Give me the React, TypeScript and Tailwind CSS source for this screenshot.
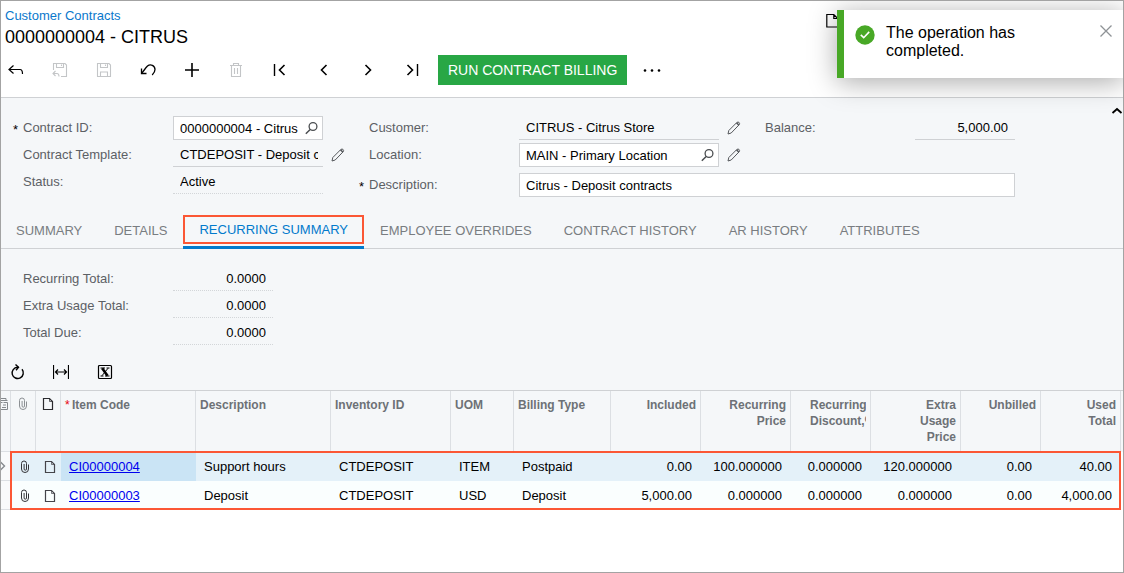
import React, { useState } from "react";

type IconProps = { children: React.ReactNode; className?: string; size?: number };

function Icon({ children, className = "", size = 16 }: IconProps) {
  return (
    <svg
      width={size}
      height={size}
      viewBox={`0 0 ${size} ${size}`}
      fill="none"
      stroke="currentColor"
      strokeWidth="1.4"
      className={`block shrink-0 ${className}`}
      aria-hidden="true"
    >
      {children}
    </svg>
  );
}

const BackIcon = () => (
  <Icon>
    <path d="M5.500 3.500 1 7.500l4.500 4M1 7.500h11q2.500 0 2.500 4.500" strokeWidth="1.200" />
  </Icon>
);

const SaveCloseIcon = () => (
  <Icon>
    <path d="M1.500 8V1.500H13L14.500 3v11.500H9M4.500 1.500v4h7v-4M9.500 2.500v1.500" strokeWidth="1.1" />
    <path d="M3.500 9 1 11.500 3.500 14M1 11.500h4q2 0 2 3" strokeWidth="1.100" />
  </Icon>
);

const SaveIcon = () => (
  <Icon>
    <path d="M1.500 1.500H13L14.500 3v11.500h-13zM4.500 1.500v4h7v-4M9.500 2.500v1.500M4.500 14.500v-4.500h7v4.500" strokeWidth="1.1" />
  </Icon>
);

const UndoIcon = () => (
  <Icon>
    <path d="M1.500 6.500v5h5" strokeWidth="1.300" />
    <path d="M1.500 11.500C4 8.500 5.500 6 7.500 4c3-2.500 7.500-.5 7.500 3.500 0 2-1 3.700-2.800 5.500" strokeWidth="1.300" />
  </Icon>
);

const PlusIcon = () => (
  <Icon>
    <path d="M8 1v14M1 8h14" strokeWidth="1.600" />
  </Icon>
);

const TrashIcon = () => (
  <Icon>
    <path d="M2 3.500h12M5.500 3.500v-2h5v2M3.500 3.500v11h9v-11M6.500 6v6M9.500 6v6" strokeWidth="1.100" />
  </Icon>
);

const FirstIcon = () => (
  <Icon>
    <path d="M2.500 2v12" strokeWidth="1.400" />
    <path d="M12.500 3 7.500 8l5 5" strokeWidth="1.600" />
  </Icon>
);

const PrevIcon = () => (
  <Icon>
    <path d="M10.500 3 5.500 8l5 5" strokeWidth="1.600" />
  </Icon>
);

const NextIcon = () => (
  <Icon>
    <path d="m5.500 3 5 5-5 5" strokeWidth="1.600" />
  </Icon>
);

const LastIcon = () => (
  <Icon>
    <path d="M13.500 2v12" strokeWidth="1.400" />
    <path d="m3.500 3 5 5-5 5" strokeWidth="1.600" />
  </Icon>
);

const SearchIcon = () => (
  <Icon size={14} className="text-[#4a4d50]">
    <circle cx="9" cy="5.500" r="3.900" strokeWidth="1.300" />
    <path d="M6.200 8.500 1.800 12.700" strokeWidth="1.500" />
  </Icon>
);

const PencilIcon = () => (
  <Icon size={14} className="text-[#55585c]">
    <path d="M1 13l.8-3.500L9.800 1.500q1.300-1 2.300 0 1 1 0 2.300L4.200 12z" strokeWidth="1" />
    <path d="m9.500 1.800 2.500 2.500" strokeWidth="1.600" />
  </Icon>
);

const RefreshIcon = () => (
  <Icon>
    <path d="M9.500 3.300H8.500A5.600 5.600 0 1 0 13 5.300" strokeWidth="1.400" />
    <path d="M6.500.5 9.500 3.300 7 6.200" strokeWidth="1.400" />
  </Icon>
);

const FitIcon = () => (
  <Icon>
    <path d="M.5 1v14M15.500 1v14M2.500 8h11M5 5.500 2.500 8 5 10.500M11 5.500 13.500 8 11 10.500" strokeWidth="1.200" />
  </Icon>
);

const ExportIcon = () => (
  <Icon>
    <rect x="1.500" y="1.500" width="13" height="13" rx="1" strokeWidth="1.200" />
    <path d="m5.200 4.200 5.300 7.600" strokeWidth="2.600" />
    <path d="M11 4.300 5 11.700M3.500 4h4.500M9.500 4h3M3.500 12h3M8 12h4.500" strokeWidth="1" />
  </Icon>
);

const ClipIcon = ({ className = "" }: { className?: string }) => (
  <svg width="10" height="14" viewBox="0 0 10 14" fill="none" stroke="currentColor" strokeWidth="1" className={`block ${className}`} aria-hidden="true">
    <path d="M1.500 3.500v5.500a3.500 3.500 0 0 0 7 0V4.500M1.500 3.500a2.500 2.500 0 0 1 5 0V9a1.200 1.200 0 0 1-2.400 0V4" />
  </svg>
);

const PageIcon = ({ className = "" }: { className?: string }) => (
  <svg width="12" height="14" viewBox="0 0 12 14" fill="none" stroke="currentColor" className={`block ${className}`} aria-hidden="true">
    <path d="M1.500 1.500h6l3 3v8h-9z" strokeWidth="1.200" />
    <path d="M7.500 1.500v3h3" strokeWidth=".7" />
  </svg>
);

const toolbar = [
  { name: "Back", icon: <BackIcon />, disabled: false },
  { name: "Save and Close", icon: <SaveCloseIcon />, disabled: true },
  { name: "Save", icon: <SaveIcon />, disabled: true },
  { name: "Undo", icon: <UndoIcon />, disabled: false },
  { name: "Add", icon: <PlusIcon />, disabled: false },
  { name: "Delete", icon: <TrashIcon />, disabled: true },
  { name: "First", icon: <FirstIcon />, disabled: false },
  { name: "Previous", icon: <PrevIcon />, disabled: false },
  { name: "Next", icon: <NextIcon />, disabled: false },
  { name: "Last", icon: <LastIcon />, disabled: false },
];

function FieldLabel({ id, text, required = false }: { id: string; text: string; required?: boolean }) {
  return (
    <div className="flex h-[18px] w-40 shrink-0 text-[#5c6065]">
      <span className="w-2.5 shrink-0 pt-0.5 text-black">{required ? "*" : ""}</span>
      <label htmlFor={id}>{text}</label>
    </div>
  );
}

type FieldProps = {
  id: string;
  value: string;
  width: string;
  kind?: "box" | "line" | "dotted";
  search?: boolean;
  right?: boolean;
};

function Field({ id, value, width, kind = "box", search = false, right = false }: FieldProps) {
  const frame =
    kind === "box"
      ? "border border-[#cfd1d4] bg-white pl-1.5 pr-1"
      : kind === "line"
        ? "border-b border-[#cfd1d4] pl-[7px] pr-[5px]"
        : "border-b border-dotted border-[#d3d6d9] pl-[7px] pr-[5px]";
  return (
    <div className={`flex h-6 items-center ${width} ${frame}`}>
      <input
        id={id}
        defaultValue={value}
        readOnly={kind !== "box"}
        className={`h-5 min-w-0 flex-1 bg-transparent text-black outline-none ${right ? "pr-0.5 text-right" : ""}`}
      />
      {search && (
        <button type="button" aria-label="Select" className="shrink-0">
          <SearchIcon />
        </button>
      )}
    </div>
  );
}

const EditButton = () => (
  <button type="button" aria-label="Edit" className="ml-2 shrink-0">
    <PencilIcon />
  </button>
);

const tabs = [
  "SUMMARY",
  "DETAILS",
  "RECURRING SUMMARY",
  "EMPLOYEE OVERRIDES",
  "CONTRACT HISTORY",
  "AR HISTORY",
  "ATTRIBUTES",
];

const totals = [
  { id: "recurring-total", label: "Recurring Total:", value: "0.0000" },
  { id: "extra-total", label: "Extra Usage Total:", value: "0.0000" },
  { id: "total-due", label: "Total Due:", value: "0.0000" },
];

const columns: { title: React.ReactNode; right?: boolean }[] = [
  { title: "Description" },
  { title: "Inventory ID" },
  { title: "UOM" },
  { title: "Billing Type" },
  { title: "Included", right: true },
  { title: <>Recurring<br />Price</>, right: true },
  {
    title: (
      <span className="ml-auto block w-14 overflow-hidden text-left whitespace-nowrap">
        Recurring
        <br />
        Discount,%
      </span>
    ),
    right: true,
  },
  { title: <>Extra<br />Usage<br />Price</>, right: true },
  { title: "Unbilled", right: true },
  { title: <>Used<br />Total</>, right: true },
];

const rows = [
  {
    code: "CI00000004",
    cells: ["Support hours", "CTDEPOSIT", "ITEM", "Postpaid", "0.00", "100.000000", "0.000000", "120.000000", "0.00", "40.00"],
  },
  {
    code: "CI00000003",
    cells: ["Deposit", "CTDEPOSIT", "USD", "Deposit", "5,000.00", "0.000000", "0.000000", "0.000000", "0.00", "4,000.00"],
  },
];

const headCell = "border-r border-b border-[#dcdfe3] pt-1.5 align-top";

function ItemsGrid() {
  return (
    <div className="relative border-t border-[#cfd1d4] bg-white">
      <table className="w-full table-fixed border-separate border-spacing-0">
        <colgroup>
          <col className="w-[11px]" />
          <col className="w-[25px]" />
          <col className="w-[25px]" />
          <col className="w-[135px]" />
          <col className="w-[135px]" />
          <col className="w-[120px]" />
          <col className="w-[63px]" />
          <col className="w-[97px]" />
          <col className="w-[90px]" />
          <col className="w-[90px]" />
          <col className="w-[80px]" />
          <col className="w-[90px]" />
          <col className="w-[80px]" />
          <col className="w-[80px]" />
          <col />
        </colgroup>
        <thead className="bg-[#f5f7f9] text-xs leading-4 text-[#6d7176]">
          <tr className="h-[61px]">
            <th className={headCell}>
              <svg width="8" height="13" viewBox="0 0 8 13" fill="none" stroke="#85898d" className="block" aria-hidden="true">
                <path d="M1 1.500h5v2M1 3.500h6.500M3.500 5.500h4v7H1M1 5.500h1.500M3 8h3M2 10.500h4" />
              </svg>
            </th>
            <th className={headCell}>
              <ClipIcon className="mx-auto text-[#8c9094]" />
            </th>
            <th className={headCell}>
              <PageIcon className="mx-auto text-[#2a2a2e]" />
            </th>
            <th className={`${headCell} px-1 text-left font-bold`}>
              <span className="inline-block w-[7px] font-normal text-red-600">*</span>
              Item Code
            </th>
            {columns.map((c, i) => (
              <th key={i} className={`${headCell} px-1 font-bold ${c.right ? "text-right" : "text-left"}`}>
                {c.title}
              </th>
            ))}
            <td />
          </tr>
        </thead>
        <tbody className="text-[13px] leading-4 text-black">
          {rows.map((r, ri) => (
            <tr key={r.code} className={`h-[29px] ${ri === 0 ? "bg-[#e4f1f9]" : "bg-[#fafefe]"}`}>
              <td className="border-b border-[#dcdfe3] bg-[#f9fafb]">
                {ri === 0 && (
                  <svg width="6" height="10" viewBox="0 0 6 10" fill="none" stroke="#85898d" strokeWidth="1.400" className="block" aria-hidden="true">
                    <path d="m.5 1 4 4-4 4" />
                  </svg>
                )}
              </td>
              <td className="pl-0.5">
                <ClipIcon className="mx-auto text-[#333337]" />
              </td>
              <td className="pl-0.5">
                <PageIcon className="mx-auto text-[#44444a]" />
              </td>
              <td className={`px-2 ${ri === 0 ? "bg-[#cae4f5]" : ""}`}>
                <a href="#item" className="text-[#0000ee] underline">
                  {r.code}
                </a>
              </td>
              {r.cells.map((v, i) => (
                <td key={i} className={`border-r border-transparent px-2 ${columns[i].right ? "text-right" : ""}`}>
                  {v}
                </td>
              ))}
              <td className="bg-white" />
            </tr>
          ))}
        </tbody>
      </table>
      <div className="pointer-events-none absolute right-[3px] bottom-0 left-2.5 h-[59px] border-2 border-[#fb5735]" />
    </div>
  );
}

function Toast({ onClose }: { onClose: () => void }) {
  return (
    <div
      role="status"
      className="absolute top-2.5 right-0 z-10 flex w-[287px] items-start border-l-[7px] border-[#48a826] bg-white pt-3.5 pr-2.5 pb-[18px] pl-[11px] text-base leading-[18px] text-black shadow-[0_4px_28px_rgba(0,0,0,0.34)]"
    >
      <svg width="20" height="20" viewBox="0 0 20 20" className="mt-px mr-[11px] block shrink-0" aria-hidden="true">
        <circle cx="10" cy="10" r="9.700" fill="#48a826" />
        <path d="m5.800 9.900 2.900 2.800 5.500-5.800" fill="none" stroke="#fff" strokeWidth="1.600" />
      </svg>
      <p className="w-[150px]">The operation has completed.</p>
      <button type="button" aria-label="Close" onClick={onClose} className="ml-auto text-[#8e9296]">
        <Icon>
          <path d="m2.500 1.500 11 11M13.500 1.500l-11 11" strokeWidth="1.300" />
        </Icon>
      </button>
    </div>
  );
}

export default function App() {
  const [tab, setTab] = useState("RECURRING SUMMARY");
  const [toast, setToast] = useState(true);

  return (
    <div className="relative min-h-screen overflow-hidden bg-white font-['Liberation_Sans',Arial,sans-serif] text-[13px] leading-[18px] after:pointer-events-none after:absolute after:inset-0 after:z-20 after:border after:border-[#a3a3a3]">
      {toast && <Toast onClose={() => setToast(false)} />}

      <header className="border-b border-[#cfd1d4] pt-[7px] pb-3">
        <div className="flex items-start justify-between pl-[5px]">
          <div>
            <a href="#contracts" className="block text-[#0a78cc]">
              Customer Contracts
            </a>
            <h1 className="text-lg leading-6 text-black">0000000004 - CITRUS</h1>
          </div>
          <button type="button" aria-label="Notes" className="mt-1.5 mr-[282px] text-black">
            <Icon>
              <path d="M.8 1.500h7l4 4v8.500H.8zM7.800 1.500v4h4" strokeWidth="1.200" />
            </Icon>
          </button>
        </div>
        <div className="mt-1.5 flex items-center pl-2">
          <div className="flex gap-7">
            {toolbar.map((t) => (
              <button
                key={t.name}
                type="button"
                aria-label={t.name}
                disabled={t.disabled}
                className="text-black disabled:text-[#c3c5c7]"
              >
                {t.icon}
              </button>
            ))}
          </div>
          <button type="button" className="ml-[18px] h-[30px] bg-[#28a745] px-2.5 text-sm text-white">
            RUN CONTRACT BILLING
          </button>
          <button type="button" aria-label="More" className="ml-4 text-black">
            <svg width="18" height="16" viewBox="0 0 18 16" fill="currentColor" className="block" aria-hidden="true">
              <circle cx="2" cy="8.500" r="1.300" />
              <circle cx="9" cy="8.500" r="1.300" />
              <circle cx="16" cy="8.500" r="1.300" />
            </svg>
          </button>
        </div>
      </header>

      <main>
        <div className="bg-[#f5f7f9]">
          <section className="relative flex py-[18px] pl-[13px]">
            <button type="button" aria-label="Collapse" className="absolute top-1.5 right-px text-black">
              <Icon size={12}>
                <path d="m1.500 9 4.500-4 4.500 4" strokeWidth="1.800" />
              </Icon>
            </button>
            <div className="flex w-[346px] shrink-0 flex-col gap-[3px]">
              <div className="flex items-center">
                <FieldLabel id="contract-id" text="Contract ID:" required />
                <Field id="contract-id" value="0000000004 - Citrus" width="w-[150px]" search />
              </div>
              <div className="flex items-center">
                <FieldLabel id="template" text="Contract Template:" />
                <Field id="template" value="CTDEPOSIT - Deposit contract" width="w-[150px]" kind="line" />
                <EditButton />
              </div>
              <div className="flex items-center">
                <FieldLabel id="status" text="Status:" />
                <Field id="status" value="Active" width="w-[150px]" kind="dotted" />
              </div>
            </div>
            <div className="flex flex-col gap-[3px]">
              <div className="flex items-center">
                <FieldLabel id="customer" text="Customer:" />
                <Field id="customer" value="CITRUS - Citrus Store" width="w-[200px]" kind="line" />
                <EditButton />
                <label htmlFor="balance" className="ml-6 w-[150px] text-[#5c6065]">
                  Balance:
                </label>
                <Field id="balance" value="5,000.00" width="w-[100px]" kind="line" right />
              </div>
              <div className="flex items-center">
                <FieldLabel id="location" text="Location:" />
                <Field id="location" value="MAIN - Primary Location" width="w-[200px]" search />
                <EditButton />
              </div>
              <div className="mt-[3px] flex items-center">
                <FieldLabel id="description" text="Description:" required />
                <Field id="description" value="Citrus - Deposit contracts" width="flex-1" />
              </div>
            </div>
          </section>

          <div role="tablist" className="flex h-[34px] shadow-[inset_0_-1px_0_#cfd1d4]">
            {tabs.map((t) =>
              t === tab ? (
                <button
                  key={t}
                  type="button"
                  role="tab"
                  aria-selected="true"
                  className="flex flex-col border-b-[3px] border-[#027acc] text-[#027acc]"
                >
                  <span className="flex h-[29px] items-center border-2 border-[#fb5735] px-3.5">{t}</span>
                </button>
              ) : (
                <button
                  key={t}
                  type="button"
                  role="tab"
                  aria-selected="false"
                  onClick={() => setTab(t)}
                  className="px-4 pb-0.5 text-[#797d81]"
                >
                  {t}
                </button>
              ),
            )}
          </div>

          <section className="flex flex-col gap-[3px] pt-[18px] pl-[13px]">
            {totals.map((t) => (
              <div key={t.id} className="flex items-center">
                <FieldLabel id={t.id} text={t.label} />
                <Field id={t.id} value={t.value} width="w-[100px]" kind="dotted" right />
              </div>
            ))}
          </section>

          <div className="flex gap-7 pt-[19px] pb-2.5 pl-[9px] text-black">
            <button type="button" aria-label="Refresh">
              <RefreshIcon />
            </button>
            <button type="button" aria-label="Fit to Screen">
              <FitIcon />
            </button>
            <button type="button" aria-label="Export to Excel">
              <ExportIcon />
            </button>
          </div>
        </div>
        <ItemsGrid />
      </main>
    </div>
  );
}
